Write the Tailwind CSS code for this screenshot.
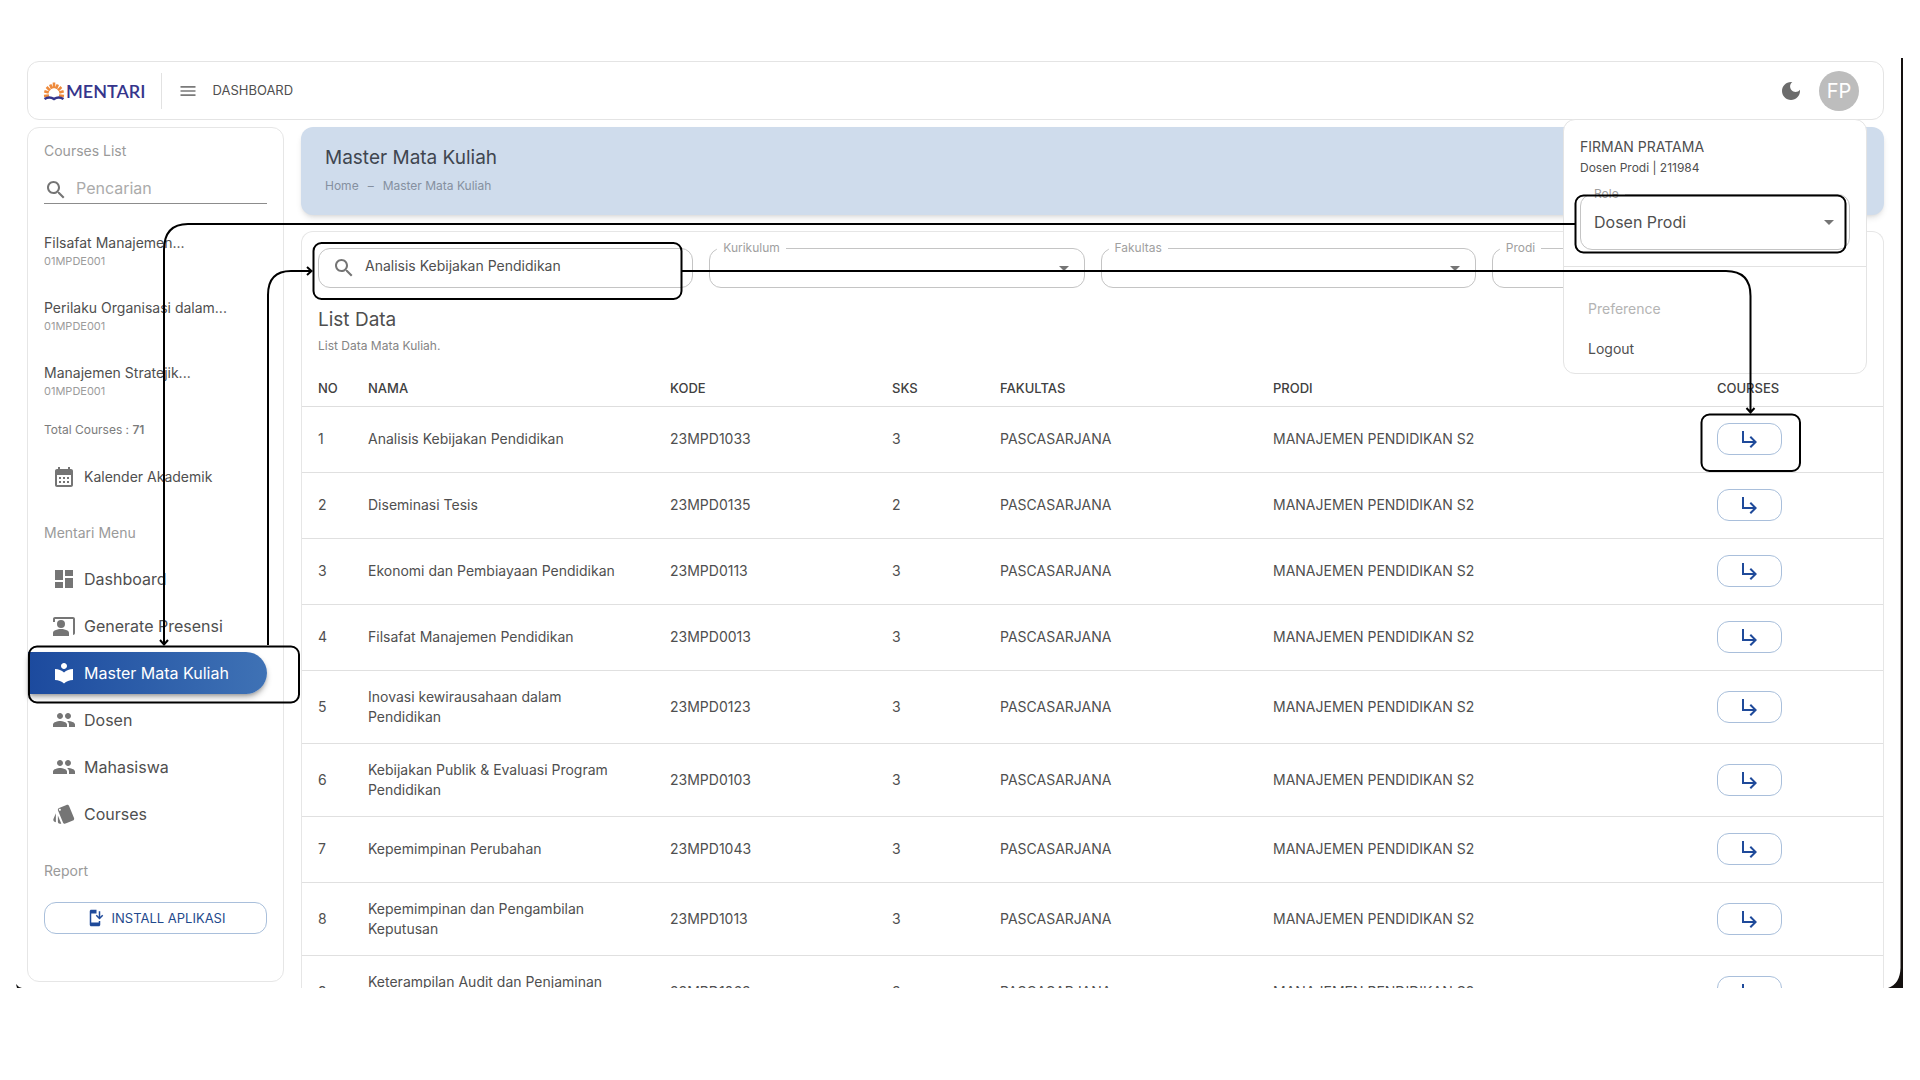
<!DOCTYPE html>
<html lang="id">
<head>
    <meta charset="UTF-8" />
    <meta name="viewport" content="width=device-width, initial-scale=1.0" />
    <title>Mentari - Master Mata Kuliah</title>
    <script src="https://cdn.jsdelivr.net/npm/@tailwindcss/browser@4"></script>
</head>
<body class="relative h-screen overflow-hidden bg-white pt-[58px] pb-[92px] font-['Inter',sans-serif] text-sm text-[#4f4f4f]">

    <!-- Icon sprite -->
    <svg class="hidden" xmlns="http://www.w3.org/2000/svg">
        <symbol id="i-search" viewBox="0 0 24 24"><path d="M15.5 14h-.79l-.28-.27C15.41 12.59 16 11.11 16 9.5 16 5.91 13.09 3 9.5 3S3 5.91 3 9.5 5.91 16 9.5 16c1.61 0 3.09-.59 4.23-1.57l.27.28v.79l5 4.99L20.49 19l-4.99-5zm-6 0C7.01 14 5 11.99 5 9.5S7.01 5 9.5 5 14 7.01 14 9.5 11.99 14 9.5 14z"/></symbol>
        <symbol id="i-menu" viewBox="0 0 24 24"><path d="M3 18h18v-2H3v2zm0-5h18v-2H3v2zm0-7v2h18V6H3z"/></symbol>
        <symbol id="i-moon" viewBox="0 0 24 24"><path d="M12 3c-4.97 0-9 4.03-9 9s4.03 9 9 9 9-4.03 9-9c0-.46-.04-.92-.1-1.36-.98 1.37-2.58 2.26-4.4 2.26-2.98 0-5.4-2.42-5.4-5.4 0-1.81.89-3.42 2.26-4.4-.44-.06-.9-.1-1.36-.1z"/></symbol>
        <symbol id="i-calendar" viewBox="0 0 24 24"><path d="M19 4h-1V2h-2v2H8V2H6v2H5c-1.11 0-1.99.9-1.99 2L3 20c0 1.1.89 2 2 2h14c1.1 0 2-.9 2-2V6c0-1.1-.9-2-2-2zm0 16H5V10h14v10zM9 14H7v-2h2v2zm4 0h-2v-2h2v2zm4 0h-2v-2h2v2zm-8 4H7v-2h2v2zm4 0h-2v-2h2v2zm4 0h-2v-2h2v2z"/></symbol>
        <symbol id="i-dashboard" viewBox="0 0 24 24"><path d="M3 13h8V3H3v10zm0 8h8v-6H3v6zm10 0h8V11h-8v10zm0-18v6h8V3h-8z"/></symbol>
        <symbol id="i-present" viewBox="0 0 24 24"><path d="M21 3H3c-1.11 0-2 .89-2 2v3h2V5h18v16c1.1 0 2-.9 2-2V5c0-1.11-.9-2-2-2z"/><circle cx="9" cy="10" r="4"/><path d="M15.39 16.56C13.71 15.7 11.53 15 9 15s-4.71.7-6.39 1.56C1.61 17.07 1 18.1 1 19.22V22h16v-2.78c0-1.12-.61-2.15-1.61-2.66z"/></symbol>
        <symbol id="i-library" viewBox="0 0 24 24"><path d="M12 11.55C9.64 9.35 6.48 8 3 8v11c3.48 0 6.64 1.35 9 3.55 2.36-2.19 5.52-3.55 9-3.55V8c-3.48 0-6.64 1.35-9 3.55zM12 8c1.66 0 3-1.34 3-3s-1.34-3-3-3-3 1.34-3 3 1.34 3 3 3z"/></symbol>
        <symbol id="i-people" viewBox="0 0 24 24"><path d="M16 11c1.66 0 2.99-1.34 2.99-3S17.66 5 16 5c-1.66 0-3 1.34-3 3s1.34 3 3 3zm-8 0c1.66 0 2.99-1.34 2.99-3S9.66 5 8 5C6.34 5 5 6.34 5 8s1.34 3 3 3zm0 2c-2.33 0-7 1.17-7 3.5V19h14v-2.5c0-2.33-4.67-3.5-7-3.5zm8 0c-.29 0-.62.02-.97.05 1.16.84 1.97 1.97 1.97 3.45V19h6v-2.5c0-2.33-4.67-3.5-7-3.5z"/></symbol>
        <symbol id="i-style" viewBox="0 0 24 24"><path d="M2.53 19.65l1.34.56v-9.03l-2.43 5.86c-.41 1.02.08 2.19 1.09 2.61zm19.5-3.7L17.07 3.98c-.31-.75-1.04-1.21-1.81-1.23-.26 0-.53.04-.79.15L7.1 5.95c-.75.31-1.21 1.03-1.23 1.8-.01.27.04.54.15.8l4.96 11.97c.31.76 1.05 1.22 1.83 1.23.26 0 .52-.05.77-.15l7.36-3.05c1.02-.42 1.51-1.59 1.09-2.6zM7.88 8.75c-.55 0-1-.45-1-1s.45-1 1-1 1 .45 1 1-.45 1-1 1zm-2 11c0 1.1.9 2 2 2h1.45l-3.45-8.34v6.34z"/></symbol>
        <symbol id="i-install" viewBox="0 0 24 24"><path d="M17 18H7V6h7V1H7c-1.1 0-2 .9-2 2v18c0 1.1.9 2 2 2h10c1.1 0 2-.9 2-2v-5h-2v2z"/><path d="M18 14l5-5-1.41-1.41L19 10.17V3h-2v7.17l-2.59-2.58L13 9l5 5z"/></symbol>
        <symbol id="i-caret" viewBox="0 0 24 24"><path d="M7 10l5 5 5-5z"/></symbol>
        <symbol id="i-sub" viewBox="0 0 24 24"><path d="M19 15l-6 6-1.42-1.42L15.17 16H4V4h2v10h9.17l-3.59-3.58L13 9l6 6z"/></symbol>
    </svg>

    <div class="mr-[17px] ml-4 flex h-full flex-col gap-[7px] overflow-hidden pt-[3px] pr-[19px] pl-[11px]">

        <header class="relative z-10 flex h-[59px] shrink-0 items-center rounded-xl border border-[#e4e4e4] bg-white pr-6 pl-[15px]">
            <a href="#" class="flex items-center gap-px">
                <svg viewBox="0 0 22 20" width="22" height="20" fill="none">
                    <g stroke="#ee8a3c" stroke-width="2.6">
                        <path d="M6 14.5L1 15M5.8 11.6L1.3 10.2M7 9.4L3.6 6M9 7.8L7.2 3.4M11 7.2V1.6M13 7.8L14.8 3.4M15 9.4L18.4 6M16.2 11.6L20.7 10.2M16 14.5L21 15"/>
                    </g>
                    <path d="M1.5 18C5 15.8 8 16 11 18C14 16 17 15.8 20.5 18" stroke="#35358c" stroke-width="2.6"/>
                </svg>
                <span class="font-['Lato',sans-serif] text-lg font-semibold text-[#35358c]">MENTARI</span>
            </a>
            <div class="ml-4 h-9 w-px bg-[#e2e2e2]"></div>
            <button class="ml-4" aria-label="Menu"><svg class="size-5 fill-[#7a7a7a]"><use href="#i-menu"/></svg></button>
            <span class="ml-[14px] text-[13px]">DASHBOARD</span>
            <button class="ml-auto" aria-label="Mode gelap"><svg class="size-6 fill-[#6c6c6c]"><use href="#i-moon"/></svg></button>
            <button class="ml-4 size-10 rounded-full bg-[#bdbdbd] text-xl text-white">FP</button>

            <!-- Account menu -->
            <div class="absolute top-[57px] right-4 w-[304px] rounded-xl border border-[#e4e4e4] bg-white pb-[14px]">
                <div class="px-4 pt-[17px]">
                    <p class="leading-5">FIRMAN PRATAMA</p>
                    <p class="mt-px text-xs leading-5">Dosen Prodi | 211984</p>
                    <div class="relative mt-4">
                        <label for="role" class="absolute -top-2 left-2 bg-white px-[6px] text-xs leading-4 text-[#a0a0a0]">Role</label>
                        <select id="role" class="h-14 w-full appearance-none rounded-xl border border-[#c4c4c4] px-[13px] text-base">
                            <option>Dosen Prodi</option>
                        </select>
                        <svg class="pointer-events-none absolute top-4 right-[9px] size-6 fill-[#757575]"><use href="#i-caret"/></svg>
                    </div>
                </div>
                <div class="mt-4 border-t border-[#e2e2e2] px-6 pt-8">
                    <p class="leading-5 text-[#b4b4b4]">Preference</p>
                    <button class="mt-5 block leading-5">Logout</button>
                </div>
            </div>
        </header>

        <div class="flex min-h-0 flex-1 gap-[17px]">

            <aside class="mb-[6px] w-[257px] shrink-0 rounded-xl border border-[#e6e6e6] pt-[13px]">
                <div class="px-4">
                    <h2 class="leading-5 text-[#9a9a9a]">Courses List</h2>
                    <div class="mt-4 flex h-[27px] items-center gap-2 border-b border-[#8c8c8c]">
                        <svg class="size-6 shrink-0 fill-[#757575]"><use href="#i-search"/></svg>
                        <input type="text" aria-label="Pencarian" placeholder="Pencarian" class="mb-1 h-6 w-full min-w-0 text-base outline-none placeholder:text-[#ababab]" />
                    </div>
                    <ul class="mt-[29px] flex flex-col gap-[29px]">
                        <li><p class="leading-5">Filsafat Manajemen...</p><p class="text-[11px] leading-4 text-[#9c9c9c]">01MPDE001</p></li>
                        <li><p class="leading-5">Perilaku Organisasi dalam...</p><p class="text-[11px] leading-4 text-[#9c9c9c]">01MPDE001</p></li>
                        <li><p class="leading-5">Manajemen Stratejik...</p><p class="text-[11px] leading-4 text-[#9c9c9c]">01MPDE001</p></li>
                    </ul>
                    <p class="mt-[23px] text-xs leading-4 text-[#7c7c7c]">Total Courses : <b class="font-semibold">71</b></p>
                </div>
                <a href="#" class="mt-[18px] flex h-[42px] items-center gap-2 pl-6"><svg class="size-6 fill-[#757575]"><use href="#i-calendar"/></svg>Kalender Akademik</a>
                <h2 class="mt-[25px] px-4 leading-5 text-[#9a9a9a]">Mentari Menu</h2>
                <nav class="mt-[15px] mr-4 flex flex-col gap-[5px] text-base">
                    <a href="#" class="flex h-[42px] items-center gap-2 pl-6"><svg class="size-6 fill-[#757575]"><use href="#i-dashboard"/></svg>Dashboard</a>
                    <a href="#" class="flex h-[42px] items-center gap-2 pl-6"><svg class="size-6 fill-[#757575]"><use href="#i-present"/></svg>Generate Presensi</a>
                    <a href="#" class="flex h-[42px] items-center gap-2 rounded-r-full bg-linear-to-r from-[#1c4a9e] to-[#3f72b5] pl-6 text-white shadow-md shadow-black/30"><svg class="size-6 fill-white"><use href="#i-library"/></svg>Master Mata Kuliah</a>
                    <a href="#" class="flex h-[42px] items-center gap-2 pl-6"><svg class="size-6 fill-[#757575]"><use href="#i-people"/></svg>Dosen</a>
                    <a href="#" class="flex h-[42px] items-center gap-2 pl-6"><svg class="size-6 fill-[#757575]"><use href="#i-people"/></svg>Mahasiswa</a>
                    <a href="#" class="flex h-[42px] items-center gap-2 pl-6"><svg class="size-6 fill-[#757575]"><use href="#i-style"/></svg>Courses</a>
                </nav>
                <div class="mt-[26px] px-4">
                    <h2 class="leading-5 text-[#9a9a9a]">Report</h2>
                    <button class="mt-[21px] flex h-8 w-full items-center justify-center gap-2 rounded-xl border border-[#a9bfdb] text-[13px] text-[#1f4a8c]"><svg class="size-[18px] fill-[#1f4a9a]"><use href="#i-install"/></svg>INSTALL APLIKASI</button>
                </div>
            </aside>

            <main class="flex min-w-0 flex-1 flex-col gap-4">
                <section class="h-[88px] shrink-0 rounded-xl bg-[#cfdcec] px-6 pt-[17px] shadow-md shadow-black/10">
                    <h1 class="text-[19px] leading-7 text-[#3f4650]">Master Mata Kuliah</h1>
                    <p class="mt-1 flex gap-[9px] text-xs leading-5 text-[#8590a0]"><a href="#">Home</a><span>–</span><span>Master Mata Kuliah</span></p>
                </section>

                <section class="min-h-0 flex-1 overflow-hidden rounded-t-xl border border-b-0 border-[#e6e6e6]">
                    <div class="grid grid-cols-4 gap-4 px-4 pt-4">
                        <div class="flex h-10 items-center rounded-xl border border-[#c4c4c4] pl-[13px]">
                            <svg class="size-6 shrink-0 fill-[#757575]"><use href="#i-search"/></svg>
                            <input type="text" aria-label="Cari mata kuliah" value="Analisis Kebijakan Pendidikan" class="mb-1 ml-[9px] w-full min-w-0 outline-none" />
                        </div>
                        <div class="relative">
                            <label for="kurikulum" class="absolute -top-2 left-2 bg-white px-[6px] text-xs leading-4 text-[#a0a0a0]">Kurikulum</label>
                            <select id="kurikulum" class="h-10 w-full appearance-none rounded-xl border border-[#c4c4c4] px-3"><option></option></select>
                            <svg class="pointer-events-none absolute top-2 right-[9px] size-6 fill-[#757575]"><use href="#i-caret"/></svg>
                        </div>
                        <div class="relative">
                            <label for="fakultas" class="absolute -top-2 left-2 bg-white px-[6px] text-xs leading-4 text-[#a0a0a0]">Fakultas</label>
                            <select id="fakultas" class="h-10 w-full appearance-none rounded-xl border border-[#c4c4c4] px-3"><option></option></select>
                            <svg class="pointer-events-none absolute top-2 right-[9px] size-6 fill-[#757575]"><use href="#i-caret"/></svg>
                        </div>
                        <div class="relative">
                            <label for="prodi" class="absolute -top-2 left-2 bg-white px-[6px] text-xs leading-4 text-[#a0a0a0]">Prodi</label>
                            <select id="prodi" class="h-10 w-full appearance-none rounded-xl border border-[#c4c4c4] px-3"><option></option></select>
                            <svg class="pointer-events-none absolute top-2 right-[9px] size-6 fill-[#757575]"><use href="#i-caret"/></svg>
                        </div>
                    </div>

                    <div class="px-4 pt-[18px]">
                        <h2 class="text-[19px] leading-7">List Data</h2>
                        <p class="mt-[2px] text-xs leading-5 text-[#858585]">List Data Mata Kuliah.</p>
                    </div>

                    <table class="mt-[15px] w-full table-fixed text-left leading-5">
                        <thead>
                            <tr class="h-[35px] border-b border-[#dedede] text-[13px] text-[#404040] [&>th]:px-4 [&>th]:font-medium">
                                <th class="w-[50px]">NO</th>
                                <th class="w-[302px]">NAMA</th>
                                <th class="w-[222px]">KODE</th>
                                <th class="w-[108px]">SKS</th>
                                <th class="w-[273px]">FAKULTAS</th>
                                <th>PRODI</th>
                                <th class="w-[182px]">COURSES</th>
                            </tr>
                        </thead>
                        <tbody class="[&_button]:flex [&_button]:h-8 [&_button]:w-[65px] [&_button]:items-center [&_button]:justify-center [&_button]:rounded-xl [&_button]:border [&_button]:border-[#a9bfdb] [&_svg]:size-6 [&_svg]:fill-[#1f4a9a] [&_td]:px-4 [&_tr]:border-b [&_tr]:border-[#e0e0e0]">
                            <tr class="h-[66px]"><td>1</td><td>Analisis Kebijakan Pendidikan</td><td>23MPD1033</td><td>3</td><td>PASCASARJANA</td><td>MANAJEMEN PENDIDIKAN S2</td><td><button aria-label="Courses 1"><svg><use href="#i-sub"/></svg></button></td></tr>
                            <tr class="h-[66px]"><td>2</td><td>Diseminasi Tesis</td><td>23MPD0135</td><td>2</td><td>PASCASARJANA</td><td>MANAJEMEN PENDIDIKAN S2</td><td><button aria-label="Courses 2"><svg><use href="#i-sub"/></svg></button></td></tr>
                            <tr class="h-[66px]"><td>3</td><td>Ekonomi dan Pembiayaan Pendidikan</td><td>23MPD0113</td><td>3</td><td>PASCASARJANA</td><td>MANAJEMEN PENDIDIKAN S2</td><td><button aria-label="Courses 3"><svg><use href="#i-sub"/></svg></button></td></tr>
                            <tr class="h-[66px]"><td>4</td><td>Filsafat Manajemen Pendidikan</td><td>23MPD0013</td><td>3</td><td>PASCASARJANA</td><td>MANAJEMEN PENDIDIKAN S2</td><td><button aria-label="Courses 4"><svg><use href="#i-sub"/></svg></button></td></tr>
                            <tr class="h-[73px]"><td>5</td><td>Inovasi kewirausahaan dalam Pendidikan</td><td>23MPD0123</td><td>3</td><td>PASCASARJANA</td><td>MANAJEMEN PENDIDIKAN S2</td><td><button aria-label="Courses 5"><svg><use href="#i-sub"/></svg></button></td></tr>
                            <tr class="h-[73px]"><td>6</td><td>Kebijakan Publik &amp; Evaluasi Program Pendidikan</td><td>23MPD0103</td><td>3</td><td>PASCASARJANA</td><td>MANAJEMEN PENDIDIKAN S2</td><td><button aria-label="Courses 6"><svg><use href="#i-sub"/></svg></button></td></tr>
                            <tr class="h-[66px]"><td>7</td><td>Kepemimpinan Perubahan</td><td>23MPD1043</td><td>3</td><td>PASCASARJANA</td><td>MANAJEMEN PENDIDIKAN S2</td><td><button aria-label="Courses 7"><svg><use href="#i-sub"/></svg></button></td></tr>
                            <tr class="h-[73px]"><td>8</td><td>Kepemimpinan dan Pengambilan Keputusan</td><td>23MPD1013</td><td>3</td><td>PASCASARJANA</td><td>MANAJEMEN PENDIDIKAN S2</td><td><button aria-label="Courses 8"><svg><use href="#i-sub"/></svg></button></td></tr>
                            <tr class="h-[73px]"><td>9</td><td>Keterampilan Audit dan Penjaminan Mutu</td><td>23MPD1063</td><td>3</td><td>PASCASARJANA</td><td>MANAJEMEN PENDIDIKAN S2</td><td><button aria-label="Courses 9"><svg><use href="#i-sub"/></svg></button></td></tr>
                        </tbody>
                    </table>
                </section>
            </main>
        </div>
    </div>

    <!-- Walkthrough annotations: boxes, connectors, device edge -->
    <svg class="pointer-events-none absolute top-0 left-0 z-20" width="1920" height="1080" viewBox="0 0 1920 1080" fill="none">
        <path d="M1901 58H1903V988H1888Q1900 984 1900.500 968Z" fill="#14100f"/>
        <path d="M16 984Q18 987 22 988H17Z" fill="#111"/>
        <g stroke="#000" stroke-width="2">
            <rect x="1575.500" y="195.500" width="270" height="57" rx="8"/>
            <rect x="29" y="646.500" width="270" height="56" rx="8"/>
            <rect x="313.500" y="243" width="368" height="56" rx="8"/>
            <rect x="1701.500" y="414.500" width="98.500" height="56.500" rx="8"/>
            <path d="M1575 224H188Q164 224 164 250V644M160 640L164 644.500L168 640"/>
            <path d="M268 645V295Q268 271 291 271H311M307 267L311.500 271L307 275"/>
            <path d="M682 271H1726Q1750.500 271 1750.500 296V412M1746.500 408L1750.500 412.500L1754.500 408"/>
        </g>
    </svg>
</body>
</html>
